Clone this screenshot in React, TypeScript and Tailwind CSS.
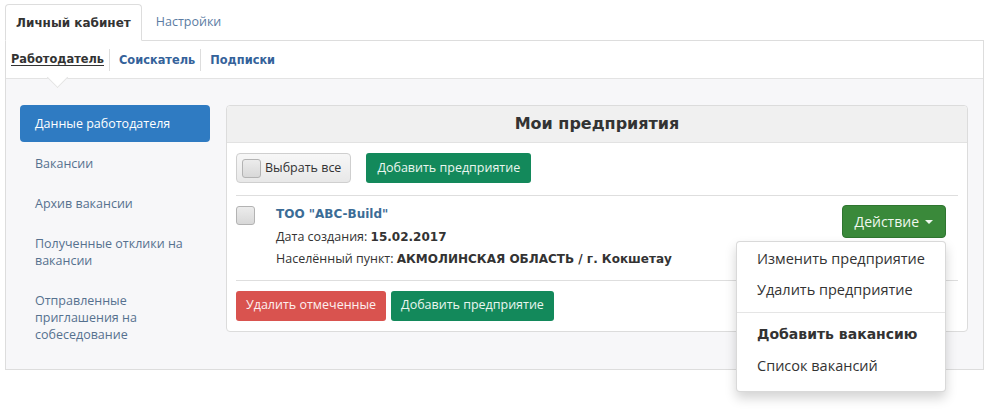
import React from 'react';

const sideItems = [
  'Вакансии',
  'Архив вакансии',
  'Полученные отклики на вакансии',
  'Отправленные приглашения на собеседование',
];

const Checkbox = () => (
  <span className="block w-[19px] h-[19px] shrink-0 rounded-[3px] border border-[#b3b3b3] bg-gradient-to-b from-[#ececec] to-[#d8d8d8]" />
);

const App = () => {
  return (
    <div className="w-[987px] h-[410px] bg-white text-[#333] font-['Open_Sans',sans-serif]">
      <div className="pt-[4px] pl-[5px] w-[984px]">
        {/* top tabs */}
        <div className="flex h-[37px] relative z-10 -mb-px">
          <div className="px-[10px] flex items-center border border-[#ddd] border-b-white bg-white rounded-t-[4px] font-['DejaVu_Sans',sans-serif] font-bold text-[12px] text-[#333]">
            Личный кабинет
          </div>
          <div className="px-[14px] flex items-center text-[12.5px] text-[#5b7ca3]">
            Настройки
          </div>
        </div>

        <div className="border border-[#ddd]">
          {/* sub navigation */}
          <div className="relative h-[38px] bg-white border-b border-[#e3e3e3] flex items-center font-['DejaVu_Sans',sans-serif] font-bold text-[11.4px]">
            <span className="pl-[5px] pr-[5px] text-[#333] underline underline-offset-2">Работодатель</span>
            <span className="pl-[9px] pr-[5px] border-l border-[#ddd] text-[#34629a] leading-[22px]">Соискатель</span>
            <span className="pl-[9px] border-l border-[#ddd] text-[#34629a] leading-[22px]">Подписки</span>
            <span className="absolute left-[44px] top-[29px] w-[15px] h-[15px] rotate-45 bg-white border-r border-b border-[#e3e3e3]" />
          </div>

          <div className="bg-[#f7f7f9] h-[290px] pt-[26px] pl-[14px] pr-[15px] flex gap-[16px]">
            {/* sidebar */}
            <div className="w-[190px] shrink-0 flex flex-col gap-[3px] text-[12.5px] leading-[17px]">
              <div className="py-[10px] px-[15px] rounded-[4px] bg-[#2f7bc2] text-white">
                Данные работодателя
              </div>
              {sideItems.map((item) => (
                <div key={item} className="py-[10px] px-[15px] text-[#56718f]">
                  {item}
                </div>
              ))}
            </div>

            {/* panel */}
            <div className="w-[742px] self-start border border-[#dcdcdc] rounded-[4px] bg-white">
              <div className="h-[37px] bg-[#f0f0f0] border-b border-[#e2e2e2] rounded-t-[4px] flex items-center justify-center font-['DejaVu_Sans',sans-serif] font-bold text-[16px] text-[#333]">
                Мои предприятия
              </div>
              <div className="px-[9px] pt-[10px] pb-[10px]">
                <div className="flex items-center gap-[15px] pb-[12px] border-b border-[#dedede]">
                  <div className="h-[30px] pl-[5px] pr-[9px] flex items-center gap-[4px] border border-[#cfcfcf] rounded-[4px] bg-gradient-to-b from-[#f7f7f7] to-[#e8e8e8] text-[12.5px] text-[#333]">
                    <Checkbox />
                    Выбрать все
                  </div>
                  <div className="h-[30px] px-[11px] flex items-center rounded-[3px] bg-[#13895b] text-[12.5px] text-[#eaf6ef]">
                    Добавить предприятие
                  </div>
                </div>

                <div className="flex items-start pt-[7px] pb-[9px] pr-[12px] border-b border-[#dedede]">
                  <div className="mt-[3px]">
                    <Checkbox />
                  </div>
                  <div className="ml-[21px] flex-1 text-[12.5px] leading-[22.5px]">
                    <div className="font-['DejaVu_Sans',sans-serif] font-bold text-[12px] text-[#3b6c96]">ТОО "ABC-Build"</div>
                    <div>
                      Дата создания: <span className="font-['DejaVu_Sans',sans-serif] font-bold text-[12px]">15.02.2017</span>
                    </div>
                    <div>
                      Населённый пункт: <span className="font-['DejaVu_Sans',sans-serif] font-bold text-[12px]">АКМОЛИНСКАЯ ОБЛАСТЬ / г. Кокшетау</span>
                    </div>
                  </div>
                  <div className="relative mt-[2px]">
                    <div className="h-[33px] px-[12px] flex items-center gap-[6px] rounded-[4px] bg-[#3a893a] border border-[#2f7530] text-[14px] text-[#f0f8ef]">
                      Действие
                      <span className="w-0 h-0 border-l-[4px] border-r-[4px] border-t-[4px] border-l-transparent border-r-transparent border-t-[#f0f8ef]" />
                    </div>
                    <div className="absolute right-0 top-[36px] z-20 w-[210px] pt-[1px] pb-[10px] bg-white border border-[rgba(0,0,0,0.15)] rounded-[4px] shadow-[0_6px_12px_rgba(0,0,0,0.175)] text-[14.5px] text-[#333] whitespace-nowrap">
                      <div className="h-[31px] px-[20px] flex items-center">Изменить предприятие</div>
                      <div className="h-[31px] px-[20px] flex items-center">Удалить предприятие</div>
                      <div className="mt-[7px] mb-[6px] h-px bg-[#e5e5e5]" />
                      <div className="h-[31px] px-[20px] flex items-center font-['DejaVu_Sans',sans-serif] font-bold text-[14px]">Добавить вакансию</div>
                      <div className="h-[31px] px-[20px] flex items-center">Список вакансий</div>
                    </div>
                  </div>
                </div>

                <div className="flex gap-[5px] pt-[10px]">
                  <div className="h-[30px] px-[10px] flex items-center rounded-[3px] bg-[#d9534f] text-[12.5px] text-[#fdf0ef]">
                    Удалить отмеченные
                  </div>
                  <div className="h-[30px] px-[10px] flex items-center rounded-[3px] bg-[#13895b] text-[12.5px] text-[#eaf6ef]">
                    Добавить предприятие
                  </div>
                </div>
              </div>
            </div>
          </div>
        </div>
      </div>
    </div>
  );
};

export default App;
